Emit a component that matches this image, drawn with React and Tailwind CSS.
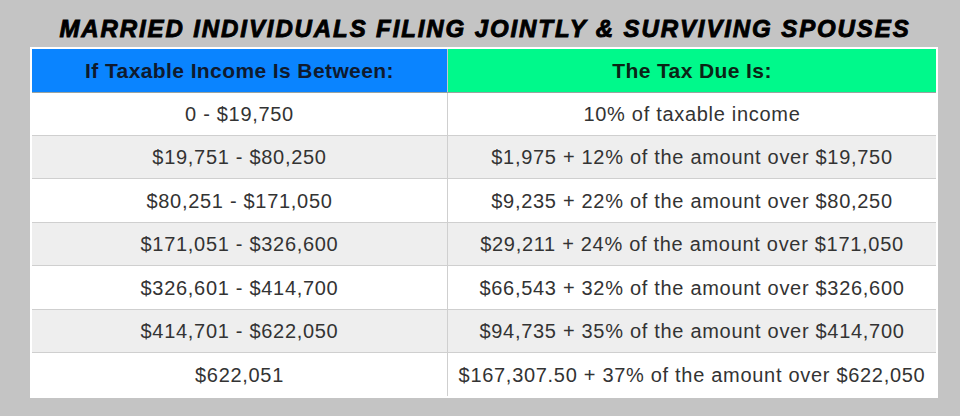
import React from "react";

const rows = [
  ["0 - $19,750", "10% of taxable income", "h-[43px]"],
  ["$19,751 - $80,250", "$1,975 + 12% of the amount over $19,750", "h-[43px]"],
  ["$80,251 - $171,050", "$9,235 + 22% of the amount over $80,250", "h-[44px]"],
  ["$171,051 - $326,600", "$29,211 + 24% of the amount over $171,050", "h-[43px]"],
  ["$326,601 - $414,700", "$66,543 + 32% of the amount over $326,600", "h-[44px]"],
  ["$414,701 - $622,050", "$94,735 + 35% of the amount over $414,700", "h-[43px]"],
  ["$622,051", "$167,307.50 + 37% of the amount over $622,050", "h-[43px]"],
];

export default function App() {
  return (
    <div className="w-[960px] h-[416px] bg-[#c4c4c4] flex flex-col overflow-hidden" style={{ fontFamily: '"Liberation Sans", Arial, sans-serif' }}>
      <div className="h-[47px] flex items-center justify-center pl-[10px] pt-[11px]">
        <h1 className="text-[24px] font-bold italic text-black leading-none tracking-[1.9px] [-webkit-text-stroke:0.9px_black] whitespace-nowrap">
          MARRIED INDIVIDUALS FILING JOINTLY &amp; SURVIVING SPOUSES
        </h1>
      </div>
      <div className="ml-[30px] w-[908px] border-2 border-white bg-white">
        <div className="grid grid-cols-[416px_1fr] h-[44px] border-b border-[#9aa3a0]">
          <div className="bg-[#0a84ff] flex items-center justify-center text-[21px] font-bold tracking-[0.4px] text-[#0f1a2e] border-r border-[#c8c8c8] pt-[1px]">
            If Taxable Income Is Between:
          </div>
          <div className="bg-[#00f98b] flex items-center justify-center text-[21px] font-bold tracking-[0.4px] text-[#0b2416] pt-[1px]">
            The Tax Due Is:
          </div>
        </div>
        {rows.map((r, i) => (
          <div
            key={i}
            className={`grid grid-cols-[416px_1fr] ${r[2]} text-[20px] tracking-[0.7px] text-[#333333] ${i % 2 === 1 ? "bg-[#eeeeee]" : "bg-white"} ${i < rows.length - 1 ? "border-b border-[#cfcfcf]" : ""}`}
          >
            <div className="flex items-center justify-center border-r border-[#cfcfcf]">{r[0]}</div>
            <div className="flex items-center justify-center">{r[1]}</div>
          </div>
        ))}
      </div>
    </div>
  );
}
